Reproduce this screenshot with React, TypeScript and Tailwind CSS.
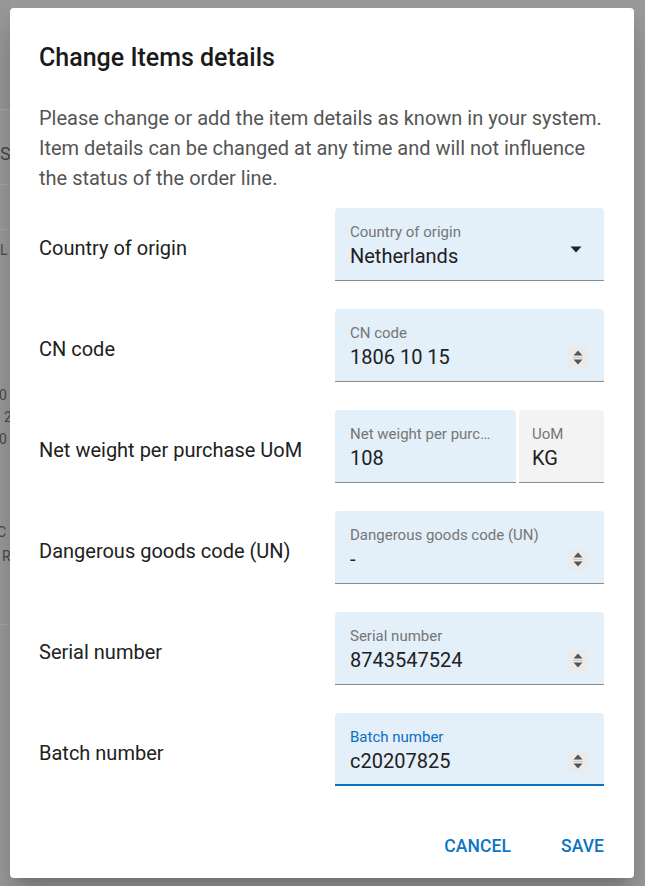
import React from 'react'

type Row = {
  label: string
  field: string
  value: string
  kind: 'select' | 'number' | 'split'
  focused?: boolean
}

const rows: Row[] = [
  { label: 'Country of origin', field: 'Country of origin', value: 'Netherlands', kind: 'select' },
  { label: 'CN code', field: 'CN code', value: '1806 10 15', kind: 'number' },
  { label: 'Net weight per purchase UoM', field: 'Net weight per purchase UoM', value: '108', kind: 'split' },
  { label: 'Dangerous goods code (UN)', field: 'Dangerous goods code (UN)', value: '-', kind: 'number' },
  { label: 'Serial number', field: 'Serial number', value: '8743547524', kind: 'number' },
  { label: 'Batch number', field: 'Batch number', value: 'c20207825', kind: 'number', focused: true },
]

const Spinner = () => (
  <div className="flex h-[21px] w-[20px] flex-col items-center justify-center bg-[#ebebeb]">
    <svg width="12" height="17" viewBox="0 0 12 17">
      <path d="M6 1.5 L10.5 6.5 H1.5 Z" fill="#555" />
      <rect x="1" y="8" width="10" height="1" fill="#c8c8c8" />
      <path d="M1.5 10.5 H10.5 L6 15.5 Z" fill="#555" />
    </svg>
  </div>
)

const Field: React.FC<{ row: Row }> = ({ row }) => {
  // ? Split field (value + unit)
  if (row.kind === 'split') {
    return (
      <div className="flex w-[269px] gap-[3px]">
        <div className="w-[181px] rounded-t-[4px] border-b border-[#8c8c8c] bg-[#e3eff9] pb-[10px] pl-[15px] pr-[18px] pt-[14px]">
          <div className="truncate text-[15px] leading-[20px] text-[#767676]">{row.field}</div>
          <div className="text-[20px] leading-[28px] text-[#212121]">{row.value}</div>
        </div>
        <div className="flex-1 rounded-t-[4px] border-b border-[#8c8c8c] bg-[#f3f3f3] pb-[10px] pl-[13px] pt-[14px]">
          <div className="text-[15px] leading-[20px] text-[#767676]">UoM</div>
          <div className="text-[20px] leading-[28px] text-[#212121]">KG</div>
        </div>
      </div>
    )
  }

  return (
    <div
      className={
        row.focused
          ? 'w-[269px] rounded-t-[4px] border-b-2 border-[#0b70bf] bg-[#e3eff9] pb-[9px] pl-[15px] pr-[16px] pt-[14px]'
          : 'w-[269px] rounded-t-[4px] border-b border-[#8c8c8c] bg-[#e3eff9] pb-[10px] pl-[15px] pr-[16px] pt-[14px]'
      }
    >
      <div className={row.focused ? 'text-[15px] leading-[20px] text-[#0b70bf]' : 'text-[15px] leading-[20px] text-[#767676]'}>
        {row.field}
      </div>
      <div className="flex h-[28px] items-center justify-between">
        <span className="text-[20px] leading-[28px] text-[#212121]">{row.value}</span>
        {row.kind === 'select' ? (
          <svg width="12" height="7" viewBox="0 0 12 7" className="mb-[14px] mr-[6px]">
            <path d="M0.5 0.5 H11.5 L6 6.5 Z" fill="#222" />
          </svg>
        ) : (
          <Spinner />
        )}
      </div>
    </div>
  )
}

export default function App() {
  return (
    <div className="relative h-[886px] w-[645px] overflow-hidden bg-[#9a9a9a]" style={{ fontFamily: 'Roboto, "Liberation Sans", sans-serif' }}>
      {/* page behind the overlay */}
      <div className="flex w-[10px] flex-col overflow-hidden text-[18px] text-[#4a4a4a]">
        <div className="h-[110px] border-b border-[#a9a9a9] bg-[#979797]" />
        <div className="h-[75px] border-b border-[#a6a6a6] pt-[32px] leading-[24px]">Su</div>
        <div className="h-[45px] border-b border-[#a6a6a6]" />
        <div className="h-[395px] border-b border-[#a6a6a6] text-[14px]">
          <div className="ml-[-8px] pt-[10px] leading-[20px]">EL</div>
          <div className="ml-[-1px] mt-[124px] leading-[22px]">0</div>
          <div className="ml-[4px] leading-[22px]">2</div>
          <div className="ml-[-1px] leading-[22px]">0</div>
          <div className="ml-[-3px] mt-[70px] leading-[24px]">C</div>
          <div className="ml-[2px] leading-[24px]">R</div>
        </div>
      </div>

      {/* dialog */}
      <div className="absolute left-[10px] top-[8px] w-[624px] rounded-[4px] bg-white pb-[14px] pl-[29px] pr-[30px] pt-[34px] shadow-[0_11px_15px_-7px_rgba(0,0,0,0.2),0_24px_38px_3px_rgba(0,0,0,0.14)]">
        <h2 className="text-[25px] font-medium leading-[32px] text-[#1a1a1a]">Change Items details</h2>
        <p className="mt-[29px] text-[20px] leading-[30px] text-[#555]">
          Please change or add the item details as known in your system. Item details can be changed at any time and will
          not influence the status of the order line.
        </p>

        <div className="mt-[15px] flex flex-col gap-[28px]">
          {rows.map((row) => (
            <div key={row.label} className="flex items-center justify-between">
              <span className="pt-[6px] text-[20px] text-[#212121]">{row.label}</span>
              <Field row={row} />
            </div>
          ))}
        </div>

        <div className="mt-[42px] flex h-[36px] items-center justify-end gap-[50px]">
          <button className="text-[17.5px] font-medium tracking-[0.005em] text-[#0b74c4]">CANCEL</button>
          <button className="text-[17.5px] font-medium tracking-[0.005em] text-[#0b74c4]">SAVE</button>
        </div>
      </div>
    </div>
  )
}
